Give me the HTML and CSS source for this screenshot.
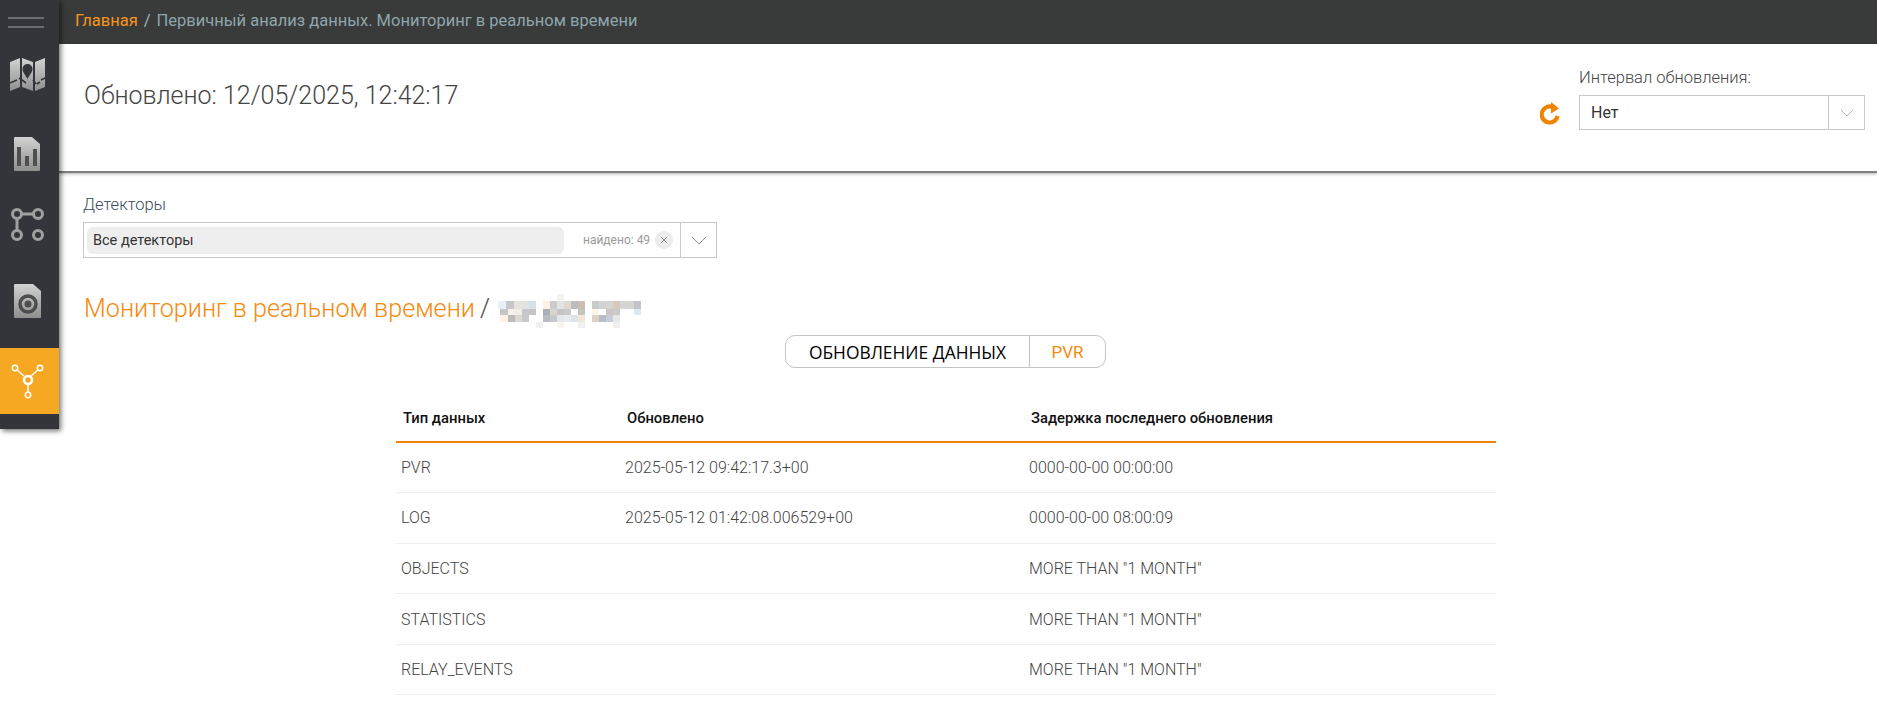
FILE: index.html
```html
<!DOCTYPE html>
<html lang="ru">
<head>
<meta charset="utf-8">
<title>Мониторинг в реальном времени</title>
<link rel="stylesheet" href="styles.css">
</head>
<body>
<div class="app">
  <aside class="sidebar">
    <svg class="icon" width="59" height="44" viewBox="0 0 59 44"><rect x="8" y="17" width="36" height="2" fill="#6c6d70"/><rect x="8" y="26" width="36" height="2" fill="#6c6d70"/></svg>
    <div class="nav-item nav-map">
      <svg width="59" height="60" viewBox="0 0 59 60"><defs><linearGradient id="g" x1="0" y1="0" x2="0" y2="1"><stop offset="0" stop-color="#d2d2d2"/><stop offset="1" stop-color="#8f8f8f"/></linearGradient></defs>
        <path d="M10 19l10-4v29l-10 4zM22 15l11 4v29l-11-4zM35 19l10-4v29l-10 4z" fill="url(#g)"/>
        <path d="M27.500 21a5 5 0 0 1 5 5c0 3-3 6-5 10c-2-4-5-7-5-10a5 5 0 0 1 5-5z" fill="#33353a"/>
        <path d="M10 40l7-3M19 35l3 2M33 37l3 4M37 41l3-2M41 37l4-2M22 37l4 3" stroke="#33353a" stroke-width="1.600" fill="none"/></svg>
    </div>
    <div class="nav-item nav-doc">
      <svg width="59" height="36" viewBox="0 0 59 36"><path d="M15 1h17l8 7v26a1 1 0 0 1-1 1H15a1 1 0 0 1-1-1V2a1 1 0 0 1 1-1z" fill="url(#g)"/><path d="M17 11h4v19h-4zM25 20h4v10h-4zM33 13h4v17h-4z" fill="#4f4f50"/></svg>
    </div>
    <div class="nav-item nav-flow">
      <svg width="59" height="34" viewBox="0 0 59 34"><g fill="none" stroke="#a0a0a0" stroke-width="3"><circle cx="17" cy="6" r="4.500"/><circle cx="38" cy="6" r="4.500"/><circle cx="17" cy="27" r="4.500"/><circle cx="38" cy="27" r="4.500"/><path d="M22 6h11M17 11v11"/></g></svg>
    </div>
    <div class="nav-item nav-disk">
      <svg width="59" height="36" viewBox="0 0 59 36"><path d="M15 1h18l8 7v26a1 1 0 0 1-1 1H15a1 1 0 0 1-1-1V2a1 1 0 0 1 1-1z" fill="url(#g)"/><circle cx="28" cy="21" r="8" fill="none" stroke="#4d4d4e" stroke-width="3.500"/><circle cx="28" cy="21" r="3.500" fill="#4d4d4e"/></svg>
    </div>
    <div class="nav-active">
      <svg width="59" height="66" viewBox="0 0 59 66"><g fill="none" stroke="#fff"><circle cx="28" cy="32" r="4" stroke-width="2.500"/><g stroke-width="1.500"><circle cx="15" cy="20" r="2.700"/><circle cx="40" cy="20" r="2.700"/><circle cx="28" cy="47" r="2.700"/><path d="M17 22l7 6M38 22l-7 6M28 37v7"/></g></g></svg>
    </div>
  </aside>

  <div class="main">
    <nav class="crumbs"><a class="crumb-home">Главная</a><span class="crumb-sep">/</span><span class="crumb-cur">Первичный анализ данных. Мониторинг в реальном времени</span></nav>

    <header class="head">
      <div class="updated">Обновлено: 12/05/2025, 12:42:17</div>
      <div class="interval">
        <svg class="refresh" width="22" height="24" viewBox="0 0 22 24"><path d="M17.500 14a8 8 0 1 1-5-9" fill="none" stroke="#f08300" stroke-width="4.200"/><path d="M11 0l8 6.500-8 5z" fill="#f08300"/></svg>
        <div>
          <div class="interval-label">Интервал обновления:</div>
          <div class="select interval-select"><span class="select-val">Нет</span><span class="select-arrow"><svg width="14" height="8" viewBox="0 0 14 8"><path d="M1 1l6 6 6-6" fill="none" stroke="#b5b5b5"/></svg></span></div>
        </div>
      </div>
    </header>

    <section class="content">
      <label class="det-label">Детекторы</label>
      <div class="select det-select">
        <div class="chip">Все детекторы</div>
        <span class="found">найдено: 49</span>
        <span class="clear"><svg width="8" height="8" viewBox="0 0 8 8"><path d="M1 1l6 6M7 1l-6 6" stroke="#8a8a8a" fill="none"/></svg></span>
        <span class="select-arrow det-arrow"><svg width="16" height="9" viewBox="0 0 16 9"><path d="M1 1l7 7 7-7" fill="none" stroke="#8f8f8f"/></svg></span>
      </div>

      <h1 class="title"><span class="title-main">Мониторинг в реальном времени</span><span class="title-sep">/</span>
        <svg class="blur" width="143" height="34" viewBox="112 243 428 102" shape-rendering="crispEdges">
          <rect x="112" y="265" width="23" height="22" fill="#e8f0fa"/><rect x="135" y="265" width="23" height="22" fill="#c5c7ca"/><rect x="158" y="265" width="23" height="22" fill="#e6e2dd"/><rect x="181" y="265" width="23" height="22" fill="#e2e3e0"/><rect x="204" y="265" width="21" height="22" fill="#d5e0ea"/>
          <rect x="247" y="265" width="21" height="22" fill="#fdf0e6"/><rect x="268" y="265" width="21" height="22" fill="#c9cbcc"/><rect x="289" y="265" width="21" height="22" fill="#e3e3e3"/><rect x="310" y="265" width="21" height="22" fill="#ded9d4"/><rect x="331" y="265" width="21" height="22" fill="#bcbdbf"/><rect x="352" y="265" width="20" height="22" fill="#cbbfb5"/>
          <rect x="393" y="265" width="21" height="22" fill="#c8cacb"/><rect x="414" y="265" width="21" height="22" fill="#d0d4d5"/><rect x="435" y="265" width="21" height="22" fill="#d7d3cd"/><rect x="456" y="265" width="21" height="22" fill="#d6c9bd"/><rect x="477" y="265" width="21" height="22" fill="#d6d5d1"/><rect x="498" y="265" width="21" height="22" fill="#d4d4d0"/><rect x="519" y="265" width="21" height="22" fill="#c2c4c8"/>
          <rect x="118" y="287" width="23" height="20" fill="#c6c6c6"/><rect x="141" y="287" width="21" height="20" fill="#f5f2ee"/><rect x="162" y="287" width="21" height="20" fill="#f0ece8"/><rect x="183" y="287" width="21" height="20" fill="#c6c7c8"/><rect x="204" y="287" width="21" height="20" fill="#c4c5c6"/>
          <rect x="247" y="287" width="21" height="20" fill="#a9b0b8"/><rect x="268" y="287" width="21" height="20" fill="#d8d5d0"/><rect x="289" y="287" width="21" height="20" fill="#c5c5c5"/><rect x="310" y="287" width="21" height="20" fill="#c7c9ca"/><rect x="352" y="287" width="20" height="20" fill="#c5c5c0"/>
          <rect x="393" y="287" width="21" height="20" fill="#fcf5e8"/><rect x="435" y="287" width="21" height="20" fill="#ccc4c8"/><rect x="456" y="287" width="21" height="20" fill="#c9c9c9"/><rect x="519" y="287" width="21" height="20" fill="#dde8f2"/>
          <rect x="118" y="307" width="23" height="20" fill="#fdf2e5"/><rect x="141" y="307" width="21" height="20" fill="#bebcb9"/><rect x="162" y="307" width="21" height="20" fill="#dcd8d3"/><rect x="183" y="307" width="21" height="20" fill="#c8c8c8"/>
          <rect x="247" y="307" width="21" height="20" fill="#b9bcc0"/><rect x="268" y="307" width="21" height="20" fill="#c5c8cc"/><rect x="289" y="307" width="21" height="20" fill="#e3e6ea"/><rect x="310" y="307" width="21" height="20" fill="#e8ecef"/><rect x="331" y="307" width="21" height="20" fill="#e0e4e8"/><rect x="352" y="307" width="20" height="20" fill="#f3e7dd"/>
          <rect x="393" y="307" width="21" height="20" fill="#ddd2c5"/><rect x="414" y="307" width="21" height="20" fill="#b6bdc7"/><rect x="435" y="307" width="21" height="20" fill="#c6cdd5"/><rect x="456" y="307" width="21" height="20" fill="#e8e8e8"/>
          <rect x="225" y="327" width="22" height="18" fill="#f0f0f0"/><rect x="289" y="327" width="21" height="18" fill="#f8f4f0"/><rect x="352" y="327" width="20" height="18" fill="#f0f0f0"/><rect x="456" y="327" width="21" height="18" fill="#f0eeec"/><rect x="289" y="243" width="21" height="22" fill="#f5f3f1"/>
        </svg>
      </h1>

      <div class="tabs-wrap">
        <div class="tabs"><button class="tab">ОБНОВЛЕНИЕ ДАННЫХ</button><button class="tab tab-on">PVR</button></div>
      </div>

      <table class="grid">
        <colgroup><col class="c1"><col class="c2"><col class="c3"></colgroup>
        <thead><tr><th>Тип данных</th><th>Обновлено</th><th>Задержка последнего обновления</th></tr></thead>
        <tbody>
          <tr><td>PVR</td><td>2025-05-12 09:42:17.3+00</td><td>0000-00-00 00:00:00</td></tr>
          <tr><td>LOG</td><td>2025-05-12 01:42:08.006529+00</td><td>0000-00-00 08:00:09</td></tr>
          <tr><td>OBJECTS</td><td></td><td>MORE THAN "1 MONTH"</td></tr>
          <tr><td>STATISTICS</td><td></td><td>MORE THAN "1 MONTH"</td></tr>
          <tr><td>RELAY_EVENTS</td><td></td><td>MORE THAN "1 MONTH"</td></tr>
        </tbody>
      </table>
    </section>
  </div>
</div>
</body>
</html>
```
FILE: styles.css
```css
* { box-sizing: border-box; }
html, body { margin: 0; height: 710px; overflow: hidden; background: #fff; }
body { font-family: Roboto, "Liberation Sans", sans-serif; color: #444; }
.app { display: flex; align-items: flex-start; }

.sidebar {
  position: relative; z-index: 2;
  flex: 0 0 59px; width: 59px; height: 429px;
  background: #33353a;
  box-shadow: 2px 2px 5px rgba(0,0,0,.55);
  display: flex; flex-direction: column;
}
.sidebar svg { display: block; }
.nav-item { display: block; }
.nav-map { margin-top: -1px; margin-bottom: 33px; }
.nav-doc { margin-bottom: 36px; }
.nav-flow { margin-bottom: 41px; }
.nav-disk { margin-bottom: 29px; }
.nav-active { background: #f7a823; height: 66px; }

.main { flex: 1; min-width: 0; }

.crumbs {
  height: 44px; background: #393b3a;
  display: flex; align-items: center;
  padding: 0 0 3px 16px;
  font-size: 16.500px;
}
.crumb-home { color: #f7941d; }
.crumb-sep { color: #9fb3bd; margin: 0 6px 0 6px; }
.crumb-cur { color: #8fa5ac; }

.head {
  height: 129px;
  border-bottom: 2px solid #808080;
  box-shadow: 0 1px 3px rgba(0,0,0,.3);
  display: flex; justify-content: space-between;
  padding: 0 12px 0 25px;
}
.updated { font-weight: 300; font-size: 25px; line-height: 30px; color: #444; margin-top: 37px; }
.interval { display: flex; align-items: flex-start; margin-top: 24px; }
.refresh { margin: 34px 17px 0 0; }
.interval-label { font-weight: 300; font-size: 16.500px; line-height: 20px; color: #444; margin-bottom: 7px; }

.select { border: 1px solid #c8c8c8; display: flex; align-items: center; background: #fff; }
.interval-select { width: 286px; height: 35px; }
.select-val { flex: 1; padding-left: 11px; font-size: 16px; color: #333; }
.select-arrow { width: 36px; align-self: stretch; border-left: 1px solid #c8c8c8; display: flex; align-items: center; justify-content: center; }

.content { padding: 22px 0 0 24px; }
.det-label { display: block; font-weight: 300; font-size: 16.500px; line-height: 20px; color: #3b4a5a; margin-bottom: 7px; }
.det-select { width: 634px; height: 36px; padding-left: 3px; }
.chip { width: 477px; height: 27px; background: #eee; border-radius: 6px; font-size: 14.500px; line-height: 27px; padding-left: 6px; color: #333; }
.found { font-size: 12px; color: #9a9a9a; margin-left: 19px; white-space: nowrap; }
.clear { width: 18px; height: 18px; border-radius: 50%; background: #ececec; display: flex; align-items: center; justify-content: center; margin-left: 5px; }
.det-arrow { margin-left: 7px; flex: 1; }

.title { display: flex; align-items: center; margin: 32px 0 0 1px; height: 38px; font-weight: 300; font-size: 25.200px; line-height: 38px; }
.title-main { color: #f58a0c; }
.title-sep { color: #444; margin-left: 5px; }
.blur { margin-left: 8px; margin-top: 4px; }

.tabs-wrap { display: flex; margin-top: 7px; padding-left: 702px; }
.tabs { display: flex; height: 33px; border: 1px solid #c4c4c4; border-radius: 10px; }
.tab { border: 0; background: none; padding: 0; font-family: "Open Sans", sans-serif; font-size: 17.400px; color: #000; width: 243px; height: 31px; }
.tab-on { width: 76px; border-left: 1px solid #c4c4c4; color: #f58a0c; font-family: Roboto, sans-serif; font-size: 17px; }

.grid { border-collapse: collapse; table-layout: fixed; width: 1100px; margin: 22px 0 0 313px; }
.c1 { width: 224px; } .c2 { width: 404px; } .c3 { width: 472px; }
.grid th { text-align: left; font-weight: 500; font-size: 14.800px; color: #111; height: 52px; padding: 4px 0 0 7px; border-bottom: 2px solid #f08300; }
.grid td { font-weight: 300; font-size: 16px; color: #444; height: 50.600px; padding: 0 0 0 5px; border-bottom: 1px solid #eee; }
```
